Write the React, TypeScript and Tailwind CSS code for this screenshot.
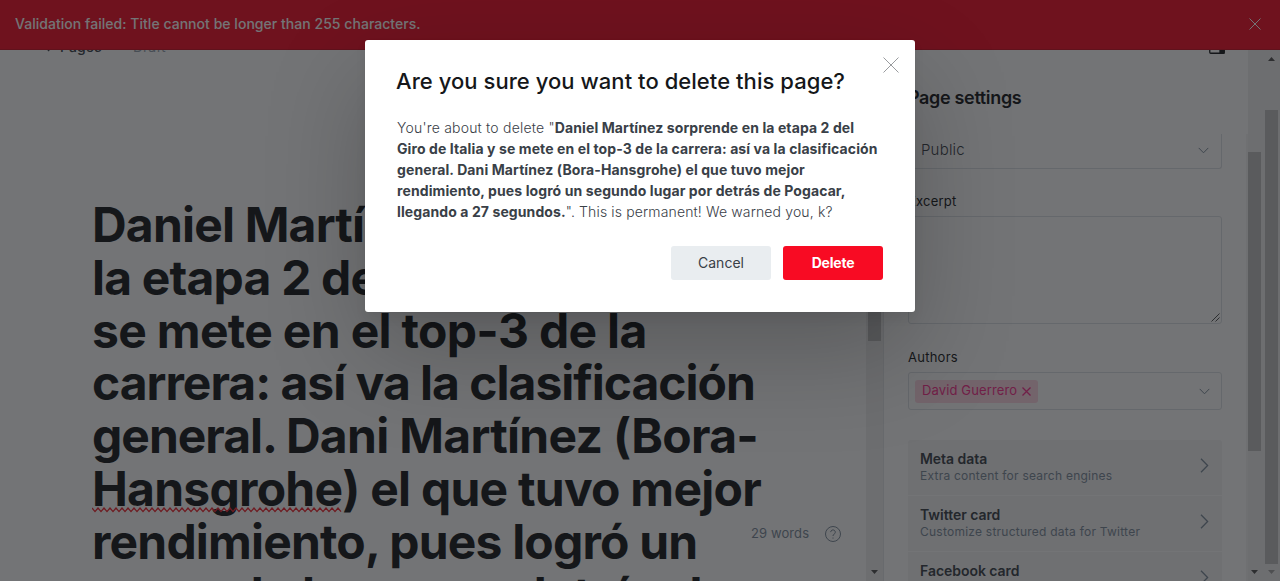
const cards = [
  { title: "Meta data", text: "Extra content for search engines" },
  { title: "Twitter card", text: "Customize structured data for Twitter" },
  { title: "Facebook card", text: "Customize Open Graph data" },
];

function Cross({ size, color, width = 1 }: { size: number; color: string; width?: number }) {
  return (
    <svg width={size} height={size} viewBox={`0 0 ${size} ${size}`} fill="none" stroke={color} strokeWidth={width} className="block shrink-0">
      <path d={`M.5 .5L${size - 0.5} ${size - 0.5}M${size - 0.5} .5L.5 ${size - 0.5}`} />
    </svg>
  );
}

function ChevronDown() {
  return (
    <svg width="11" height="7" viewBox="0 0 11 7" fill="none" stroke="#7c8b9a" className="block shrink-0">
      <path d="M.7 .9L5.5 5.8L10.3 .9" />
    </svg>
  );
}

function Caret({ up = false, color = "#505050" }: { up?: boolean; color?: string }) {
  return (
    <svg width="7" height="4" viewBox="0 0 7 4" fill={color} className="block shrink-0">
      <path d={up ? "M0 4L3.5 0L7 4Z" : "M0 0L3.5 4L7 0Z"} />
    </svg>
  );
}

function Squiggle() {
  const points = Array.from({ length: 84 }, (_, i) => `${i * 3},${i % 2 ? 4.6 : 1}`).join(" ");
  return (
    <svg width="250" height="6" viewBox="0 0 250 6" className="absolute top-[48px] left-0" fill="none" stroke="#f5222d" strokeWidth="1.3">
      <polyline points={points} />
    </svg>
  );
}

function Editor() {
  return (
    <section className="relative flex w-[866px] shrink-0 flex-col">
      <header className="flex h-[93px] shrink-0 items-center pl-[44px] text-[14px] leading-5">
        <svg width="6" height="10" viewBox="0 0 6 10" fill="none" stroke="#394047" strokeWidth="1.3">
          <path d="M5.2 .6L.9 4.8L5.2 9" />
        </svg>
        <span className="ml-[10px] w-[73px] font-medium tracking-[0.1px] text-[#394047]">Pages</span>
        <span className="text-[#95a1ad]">Draft</span>
      </header>
      <h1 className="mt-[106px] pl-[92px] text-[48px] leading-[52.8px] font-bold tracking-[-0.017em] whitespace-nowrap text-[#15171a]">
        <div>Daniel Martínez sorprende en</div>
        <div>la etapa 2 del Giro de Italia y</div>
        <div className="tracking-[-0.68px]">se mete en el top-3 de la</div>
        <div className="tracking-[-1.01px]">carrera: así va la clasificación</div>
        <div>
          <span className="tracking-[-1.02px]">general. </span>
          <span className="tracking-[-0.7px]">Dani Martínez (Bora-</span>
        </div>
        <div className="tracking-[-0.76px]">
          <span className="relative">
            Hansgrohe
            <Squiggle />
          </span>
          ) el que tuvo mejor
        </div>
        <div>rendimiento, pues logró un</div>
        <div>segundo lugar por detrás de</div>
      </h1>
      <div className="absolute top-[524px] left-[751px] flex h-5 items-center text-[13px] text-[#7c8b9a]">
        <span className="w-[74px] tracking-[0.1px]">29 words</span>
        <svg width="16" height="16" viewBox="0 0 16 16" fill="none" stroke="#7c8b9a">
          <circle cx="8" cy="8" r="7.5" />
          <path d="M5.7 6.1a2.3 2.3 0 1 1 3.4 2.1c-.8.4-1.1.8-1.1 1.8M8 11.5v1.1" />
        </svg>
      </div>
    </section>
  );
}

function Settings() {
  return (
    <aside className="flex w-[362px] shrink-0 flex-col pr-[24px] pl-[24px] text-[13px]">
      <div className="flex h-[60px] shrink-0 items-end justify-end pb-[6px]">
        <svg width="16" height="14" viewBox="0 0 16 14" fill="none" stroke="#15171a" strokeWidth="1.3" className="-mr-[3px]">
          <rect x=".75" y=".75" width="14.5" height="12.5" rx="1" />
          <path d="M11 1h4v12h-4z" fill="#15171a" />
        </svg>
      </div>
      <h4 className="mt-[26px] h-6 shrink-0 text-[18px] leading-6 font-semibold tracking-[-0.34px] text-[#15171a]">Page settings</h4>
      <div className="mt-6 flex h-[35px] shrink-0 items-center justify-between rounded-b-[3px] border border-t-0 border-[#dde1e5] pr-3 pb-[2px] pl-3 text-[15px] font-light tracking-[0.2px] text-[#394047]">
        <span className="pt-px">Public</span>
        <ChevronDown />
      </div>
      <label className="mt-[22px] h-5 shrink-0 leading-5 tracking-[0.2px] text-[#15171a]">Excerpt</label>
      <div className="mt-[5px] flex h-[108px] shrink-0 items-end justify-end rounded-[3px] border border-[#dde1e5] p-px">
        <svg width="9" height="9" viewBox="0 0 9 9" stroke="#505050">
          <path d="M.5 8.5L8.5 .5M4.5 8.5L8.5 4.5" />
        </svg>
      </div>
      <label className="mt-[23px] h-5 shrink-0 leading-5 tracking-[0.25px] text-[#15171a]">Authors</label>
      <div className="mt-[5px] flex h-[38px] shrink-0 items-center justify-between rounded-[3px] border border-[#dde1e5] pr-[11px] pl-[6px]">
        <span className="flex h-[23px] w-[123px] items-center gap-[5px] rounded-[3px] bg-[#ffd6e3] pl-[7px] tracking-[0.13px] text-[#fb2d8d]">
          David Guerrero
          <Cross size={9} color="#fb2d8d" width={1.3} />
        </span>
        <ChevronDown />
      </div>
      <div className="mt-[30px] shrink-0 rounded-t-[3px] bg-[#f4f5f6]">
        {cards.map((card) => (
          <div key={card.title} className="flex h-14 items-center justify-between border-b border-white pr-[13px] pb-[3px] pl-3">
            <div>
              <div className="mt-px text-[14px] leading-[18px] font-semibold tracking-[-0.04px] text-[#394047]">{card.title}</div>
              <div className="text-[12px] leading-4 tracking-[0.24px] text-[#7c8b9a]">{card.text}</div>
            </div>
            <svg width="9" height="15" viewBox="0 0 9 15" fill="none" stroke="#7c8b9a" strokeWidth="1.3" className="-mt-px">
              <path d="M1 .8L7.6 7.5L1 14.2" />
            </svg>
          </div>
        ))}
      </div>
    </aside>
  );
}

export default function App() {
  return (
    <div className="relative h-[581px] w-[1280px] overflow-hidden bg-white font-['Inter',sans-serif]">
      <div className="flex h-[581px] overflow-hidden">
        <Editor />
        <div className="flex w-[18px] shrink-0 flex-col items-center border-r border-[#e4e6e8] bg-[#f1f1f1] pt-[110px] pb-[7px]">
          <div className="h-[231px] w-[13px] bg-[#c1c1c1]" />
          <div className="mt-auto">
            <Caret />
          </div>
        </div>
        <Settings />
        <div className="mt-[134px] w-[2px] shrink-0 bg-[#f5f5f5]" />
        <div className="flex w-[17px] shrink-0 flex-col bg-[#f1f1f1] pt-[152px] pb-[7px]">
          <div className="h-[299px] w-[13px] bg-[#c1c1c1]" />
          <div className="mt-auto ml-[3px]">
            <Caret />
          </div>
        </div>
        <div className="flex w-[15px] shrink-0 flex-col bg-[#f1f1f1] pt-[57px] pb-[7px]">
          <div className="ml-[3px]">
            <Caret up />
          </div>
          <div className="mt-[49px] h-[454px] w-[13px] bg-[#c1c1c1]" />
          <div className="mt-auto ml-[3px]">
            <Caret color="#a3a3a3" />
          </div>
        </div>
      </div>

      <div className="absolute inset-x-0 top-0 flex h-[50px] items-center justify-between border-b border-[#d00a1e] bg-[#f50b23] pr-[19px] pb-px pl-[15px] text-[14px] font-medium tracking-[0.035px] text-white">
        <span className="pb-px">Validation failed: Title cannot be longer than 255 characters.</span>
        <Cross size={12} color="#fff" />
      </div>

      <div className="absolute inset-0 flex items-start justify-center bg-[#15171a]/60 pt-10">
        <div className="relative h-[272px] w-[550px] rounded-[3px] bg-white px-8 pt-[26px] shadow-[0_0_1px_rgba(0,0,0,0.1),0_6px_12px_rgba(0,0,0,0.06),0_40px_100px_rgba(0,0,0,0.22)]">
          <button className="absolute top-[17px] right-4">
            <Cross size={16} color="#7f8285" width={0.8} />
          </button>
          <h2 className="-ml-px text-[22px] leading-[30px] font-medium tracking-[0.05px] whitespace-nowrap text-[#15171a]">Are you sure you want to delete this page?</h2>
          <p className="mt-[21px] text-[14px] leading-[21px] font-light tracking-[0.2px] whitespace-nowrap text-[#394047]">
            You're about to delete "<strong className="font-bold tracking-[0.1px]">Daniel Martínez sorprende en la etapa 2 del
            <br />
            Giro de Italia y se mete en el top-3 de la carrera: así va la clasificación
            <br />
            general. Dani Martínez (Bora-Hansgrohe) el que tuvo mejor
            <br />
            rendimiento, pues logró un segundo lugar por detrás de Pogacar,
            <br />
            llegando a 27 segundos.</strong><span className="tracking-[0.14px]">". This is permanent! We warned you, k?</span>
          </p>
          <div className="mt-[24px] flex justify-end gap-3 text-[14px]">
            <button className="h-[34px] w-[100px] rounded-[3px] bg-[#e9edf0] pb-px text-[#394047]">Cancel</button>
            <button className="h-[34px] w-[100px] rounded-[3px] bg-[#f80b23] pb-px font-bold tracking-[-0.2px] text-white">Delete</button>
          </div>
        </div>
      </div>
    </div>
  );
}
